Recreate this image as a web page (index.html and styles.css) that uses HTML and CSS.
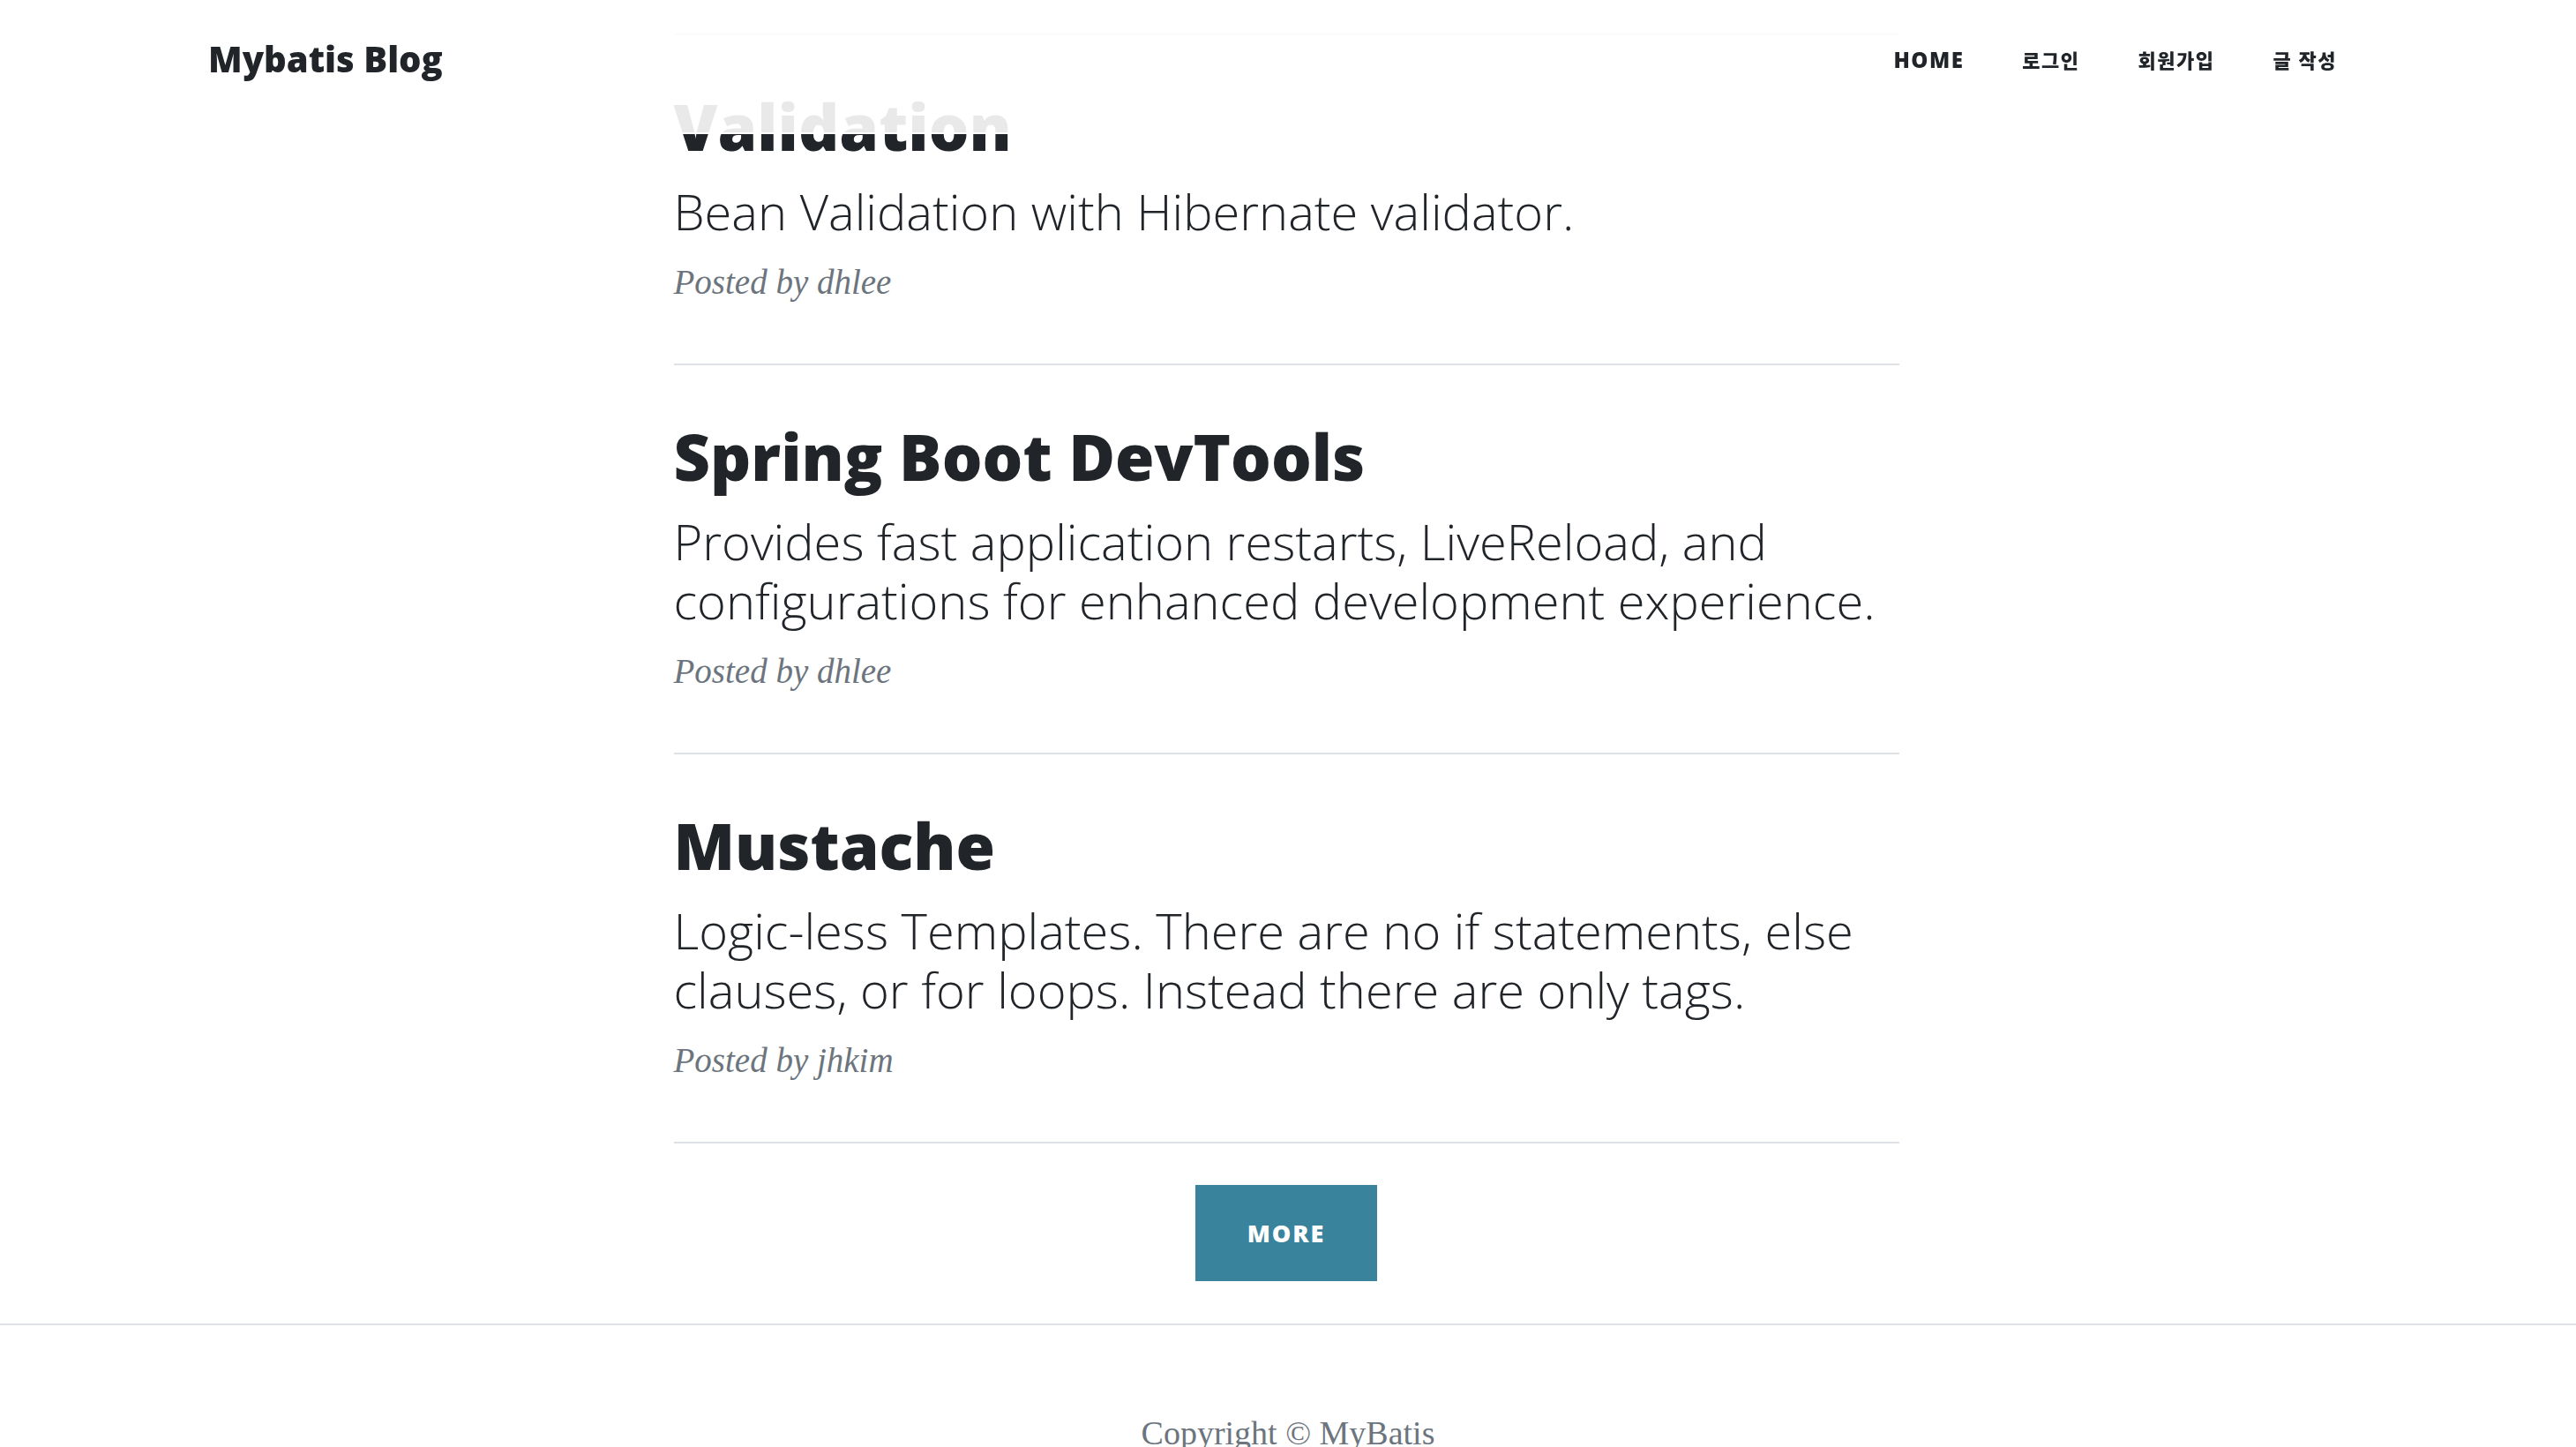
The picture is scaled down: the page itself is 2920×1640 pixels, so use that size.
FILE: index.html
```html
<!DOCTYPE html>
<html lang="ko">
<head>
<meta charset="utf-8">
<title>Mybatis Blog</title>
<link rel="stylesheet" href="styles.css">
</head>
<body>
<nav class="navbar">
  <a class="brand" href="#">Mybatis Blog</a>
  <ul class="nav">
    <li><a class="nav-link" href="#">Home</a></li>
    <li><a class="nav-link nav-link-ko" href="#">로그인</a></li>
    <li><a class="nav-link nav-link-ko" href="#">회원가입</a></li>
    <li><a class="nav-link nav-link-ko" href="#">글 작성</a></li>
  </ul>
</nav>
<main class="content">
  <hr class="divider">
  <article class="post">
    <h2 class="post-title">Validation</h2>
    <h3 class="post-subtitle">Bean Validation with Hibernate validator.</h3>
    <p class="post-meta">Posted by dhlee</p>
  </article>
  <hr class="divider">
  <article class="post">
    <h2 class="post-title">Spring Boot DevTools</h2>
    <h3 class="post-subtitle">Provides fast application restarts, LiveReload, and configurations for enhanced development experience.</h3>
    <p class="post-meta">Posted by dhlee</p>
  </article>
  <hr class="divider">
  <article class="post">
    <h2 class="post-title">Mustache</h2>
    <h3 class="post-subtitle">Logic-less Templates. There are no if statements, else clauses, or for loops. Instead there are only tags.</h3>
    <p class="post-meta">Posted by jhkim</p>
  </article>
  <hr class="divider">
  <div class="more-row">
    <a class="btn-more" href="#">More</a>
  </div>
</main>
<footer class="footer">
  <p class="copyright">Copyright © MyBatis</p>
</footer>
</body>
</html>
```
FILE: styles.css
```css
html {
  overflow: hidden;
}

body {
  margin: 0;
  background: #fff;
  color: #212529;
  font-family: "Open Sans", "Noto Sans CJK KR", sans-serif;
}

.navbar {
  position: fixed;
  top: 0;
  left: 0;
  right: 0;
  height: 152px;
  box-sizing: border-box;
  padding: 0 271px 16px 236px;
  display: flex;
  align-items: center;
  justify-content: space-between;
  background: rgba(255, 255, 255, 0.9);
  border-bottom: 2px solid #fff;
  z-index: 10;
}

.brand {
  font-family: "Open Sans", sans-serif;
  font-weight: 800;
  font-size: 40px;
  line-height: 1;
  color: #212529;
  text-decoration: none;
}

.nav {
  display: flex;
  align-items: center;
  gap: 66px;
  list-style: none;
  margin: 0;
  padding: 4px 0 0;
}

.nav-link {
  font-family: "Open Sans", "Noto Sans CJK KR", sans-serif;
  font-weight: 800;
  font-size: 24px;
  line-height: 1;
  letter-spacing: 1.5px;
  text-transform: uppercase;
  color: #212529;
  text-decoration: none;
}

.nav-link-ko {
  font-size: 22px;
}

.content {
  width: 1389px;
  padding-right: 4px;
  margin: 0 auto;
  padding-top: 38px;
  display: flex;
  flex-direction: column;
}

.divider {
  margin: 0;
  height: 0;
  border: 0;
  border-top: 2px solid #dee2e6;
}

.post {
  display: flex;
  flex-direction: column;
  padding: 60px 0 67px;
}

.post-title {
  margin: 0;
  font-family: "Open Sans", sans-serif;
  font-weight: 800;
  font-size: 72px;
  line-height: 86px;
  color: #212529;
}

.post-subtitle {
  margin: 20px 0 0;
  font-family: "Open Sans", sans-serif;
  font-weight: 300;
  font-size: 56px;
  line-height: 67px;
  color: #212529;
}

.post-meta {
  margin: 22px 0 0;
  font-family: "Liberation Serif", serif;
  font-style: italic;
  font-size: 39px;
  line-height: 50px;
  color: #6c757d;
}

.more-row {
  display: flex;
  justify-content: center;
  padding: 47px 0 48px;
}

.btn-more {
  width: 206px;
  height: 109px;
  display: flex;
  align-items: center;
  justify-content: center;
  background: #3a839c;
  color: #fff;
  font-family: "Open Sans", sans-serif;
  font-weight: 800;
  font-size: 27px;
  letter-spacing: 2px;
  text-transform: uppercase;
  text-decoration: none;
}

.footer {
  border-top: 2px solid #dee2e6;
  padding-top: 100px;
  text-align: center;
}

.copyright {
  margin: 0;
  font-family: "Liberation Serif", serif;
  font-size: 38px;
  color: #6c757d;
}
```
